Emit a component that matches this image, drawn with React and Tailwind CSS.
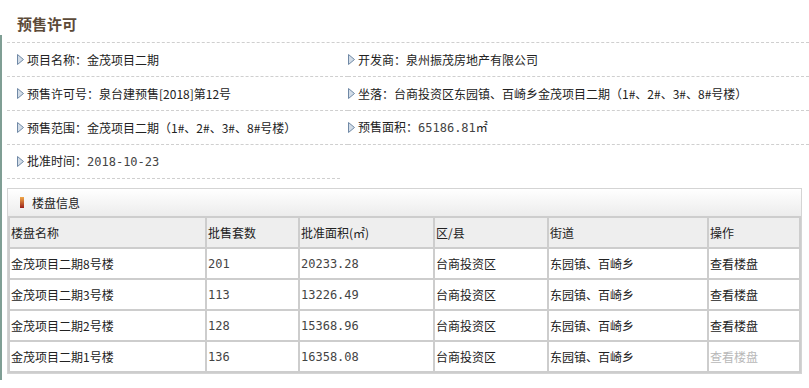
import React from 'react';

const font = { fontFamily: '"Noto Sans CJK SC", sans-serif' };

function Arrow() {
  return (
    <svg width="7" height="11" viewBox="0 0 7 11" className="shrink-0">
      <polygon points="0.5,0.5 6.5,5.5 0.5,10.5" fill="#d3dde8" stroke="#7089a6" strokeWidth="1" />
    </svg>
  );
}

function Field({ label, value, mono }) {
  return (
    <div className="flex items-center gap-[3px]">
      <Arrow />
      <span className="text-[12px] text-[#222] whitespace-nowrap">
        {label}：<span className={mono ? 'font-["DejaVu_Sans_Mono","Noto_Sans_CJK_SC",monospace] text-[#333]' : ''}>{value}</span>
      </span>
    </div>
  );
}

const rows = [
  { name: '金茂项目二期8号楼', count: '201', area: '20233.28' },
  { name: '金茂项目二期3号楼', count: '113', area: '13226.49' },
  { name: '金茂项目二期2号楼', count: '128', area: '15368.96' },
  { name: '金茂项目二期1号楼', count: '136', area: '16358.08' },
];

export default function App() {
  const cell = 'border-2 border-[#cdcdcd] h-[31px] px-[1px] text-left font-normal align-middle';
  const mono = 'font-["DejaVu_Sans_Mono","Noto_Sans_CJK_SC",monospace] text-[#444]';

  return (
    <div className="w-[809px] h-[388px] bg-white overflow-hidden text-[#222]" style={font}>
      {/* Title */}
      <div className="h-[35px] pl-[17px] pt-[14px]">
        <h2 className="text-[15px] font-bold text-[#5c4a38] leading-[20px]">预售许可</h2>
      </div>

      <div className="border-l-2 border-[#7f9e94] h-[345px] pl-[5px] pt-[7px]">
        {/* Info fields */}
        <div className="grid grid-cols-[341px_1fr] border-t border-dashed border-[#cfcfcf]">
          <div className="h-[34px] pl-[10px] flex items-center border-b border-dashed border-[#cfcfcf]">
            <Field label="项目名称" value="金茂项目二期" />
          </div>
          <div className="h-[34px] flex items-center border-b border-dashed border-[#cfcfcf]">
            <Field label="开发商" value="泉州振茂房地产有限公司" />
          </div>
          <div className="h-[34px] pl-[10px] flex items-center border-b border-dashed border-[#cfcfcf]">
            <Field label="预售许可号" value="泉台建预售[2018]第12号" />
          </div>
          <div className="h-[34px] flex items-center border-b border-dashed border-[#cfcfcf]">
            <Field label="坐落" value="台商投资区东园镇、百崎乡金茂项目二期（1#、2#、3#、8#号楼）" />
          </div>
          <div className="h-[34px] pl-[10px] flex items-center border-b border-dashed border-[#cfcfcf]">
            <Field label="预售范围" value="金茂项目二期（1#、2#、3#、8#号楼）" />
          </div>
          <div className="h-[34px] flex items-center border-b border-dashed border-[#cfcfcf]">
            <span className="flex items-center gap-[3px]">
              <Arrow />
              <span className="text-[12px] whitespace-nowrap">
                预售面积：<span className={mono}>65186.81</span>㎡
              </span>
            </span>
          </div>
        </div>
        <div className="w-[333px] h-[34px] pl-[10px] flex items-center border-b border-dashed border-[#cfcfcf]">
          <span className="flex items-center gap-[3px]">
            <Arrow />
            <span className="text-[12px] whitespace-nowrap">
              批准时间：<span className={mono}>2018-10-23</span>
            </span>
          </span>
        </div>

        {/* Building info */}
        <div className="mt-[9px] w-[795px] border border-[#d4d4d4]">
          <div className="h-[27px] flex items-center pl-[12px] gap-[8px] bg-gradient-to-b from-white to-[#ececec]">
            <div className="w-[4px] h-[11px] bg-gradient-to-b from-[#f0a848] to-[#9a1c1c]" />
            <span className="text-[12px]">楼盘信息</span>
          </div>
          <table className="w-full border-collapse text-[12px]">
            <colgroup>
              <col className="w-[197px]" />
              <col className="w-[93px]" />
              <col className="w-[135px]" />
              <col className="w-[114px]" />
              <col className="w-[160px]" />
              <col />
            </colgroup>
            <thead>
              <tr className="bg-[#eeeeee]">
                <th className={cell}>楼盘名称</th>
                <th className={cell}>批售套数</th>
                <th className={cell}>批准面积(㎡)</th>
                <th className={cell}>区/县</th>
                <th className={cell}>街道</th>
                <th className={cell}>操作</th>
              </tr>
            </thead>
            <tbody>
              {rows.map((r, i) => (
                <tr key={r.name} className="bg-white">
                  <td className={cell}>{r.name}</td>
                  <td className={cell}><span className={mono}>{r.count}</span></td>
                  <td className={cell}><span className={mono}>{r.area}</span></td>
                  <td className={cell}>台商投资区</td>
                  <td className={cell}>东园镇、百崎乡</td>
                  <td className={cell}>
                    <span className={i === rows.length - 1 ? 'text-[#b8b8b8]' : ''}>查看楼盘</span>
                  </td>
                </tr>
              ))}
            </tbody>
          </table>
        </div>
      </div>
    </div>
  );
}
